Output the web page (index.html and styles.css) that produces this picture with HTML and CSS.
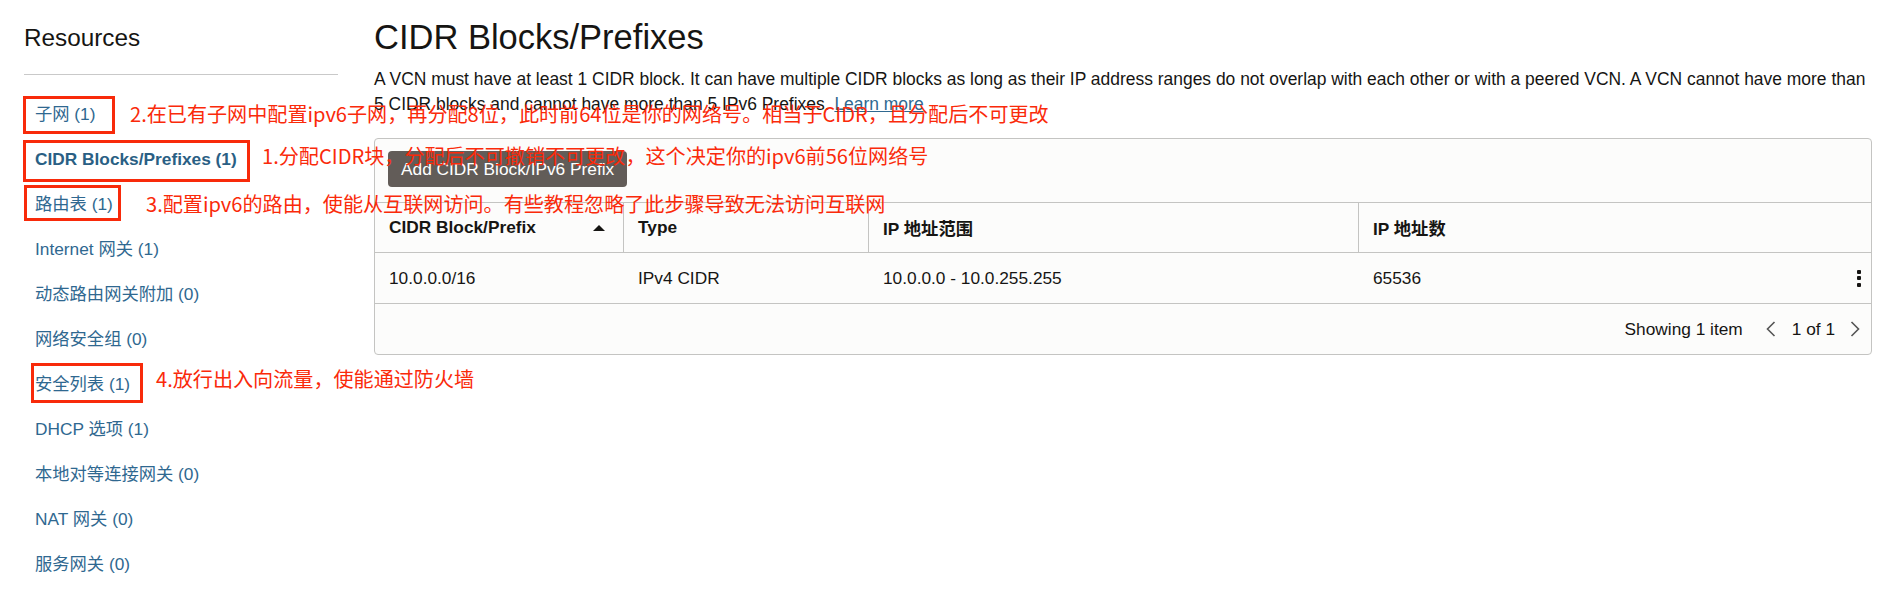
FILE: index.html
```html
<!DOCTYPE html>
<html lang="zh-CN">
<head>
<meta charset="utf-8">
<title>CIDR Blocks/Prefixes</title>
<link rel="stylesheet" href="styles.css">
</head>
<body>
<div class="page">
  <aside class="sidebar">
    <h2 class="side-title">Resources</h2>
    <nav class="side-nav">
      <a class="side-link" href="#">子网 (1)</a>
      <a class="side-link active" href="#">CIDR Blocks/Prefixes (1)</a>
      <a class="side-link" href="#">路由表 (1)</a>
      <a class="side-link" href="#">Internet 网关 (1)</a>
      <a class="side-link" href="#">动态路由网关附加 (0)</a>
      <a class="side-link" href="#">网络安全组 (0)</a>
      <a class="side-link" href="#">安全列表 (1)</a>
      <a class="side-link" href="#">DHCP 选项 (1)</a>
      <a class="side-link" href="#">本地对等连接网关 (0)</a>
      <a class="side-link" href="#">NAT 网关 (0)</a>
      <a class="side-link" href="#">服务网关 (0)</a>
    </nav>
  </aside>

  <main class="content">
    <h1 class="title">CIDR Blocks/Prefixes</h1>
    <p class="desc">A VCN must have at least 1 CIDR block. It can have multiple CIDR blocks as long as their IP address ranges do not overlap with each other or with a peered VCN. A VCN cannot have more than 5 CIDR blocks and cannot have more than 5 IPv6 Prefixes. <a class="learn" href="#">Learn more</a></p>

    <section class="table-box">
      <div class="toolbar">
        <button class="btn">Add CIDR Block/IPv6 Prefix</button>
      </div>
      <div class="tbl">
        <div class="th sep"><span>CIDR Block/Prefix</span><span class="sort"></span></div>
        <div class="th sep">Type</div>
        <div class="th sep">IP 地址范围</div>
        <div class="th">IP 地址数</div>

        <div class="td">10.0.0.0/16</div>
        <div class="td">IPv4 CIDR</div>
        <div class="td">10.0.0.0 - 10.0.255.255</div>
        <div class="td last"><span>65536</span><span class="kebab"><i></i><i></i><i></i></span></div>
      </div>
      <div class="tfoot">
        <span class="showing">Showing 1 item</span>
        <svg class="chev" width="10" height="16" viewBox="0 0 10 16"><polyline points="8.5,1 1.5,8 8.5,15" fill="none" stroke="#555" stroke-width="1.6"/></svg>
        <span class="pages">1 of 1</span>
        <svg class="chev" width="10" height="16" viewBox="0 0 10 16"><polyline points="1.5,1 8.5,8 1.5,15" fill="none" stroke="#555" stroke-width="1.6"/></svg>
      </div>
    </section>
  </main>

  <div class="marks">
    <div class="mark-box box-a"></div>
    <div class="mark-box box-b"></div>
    <div class="mark-box box-c"></div>
    <div class="mark-box box-d"></div>
    <div class="note note-2">2.在已有子网中配置ipv6子网，再分配8位，此时前64位是你的网络号。相当于CIDR，且分配后不可更改</div>
    <div class="note note-1">1.分配CIDR块，分配后不可撤销不可更改，这个决定你的ipv6前56位网络号</div>
    <div class="note note-3">3.配置ipv6的路由，使能从互联网访问。有些教程忽略了此步骤导致无法访问互联网</div>
    <div class="note note-4">4.放行出入向流量，使能通过防火墙</div>
  </div>
</div>
</body>
</html>
```

FILE: styles.css
```css
* { box-sizing: border-box; }

html, body {
  margin: 0;
  padding: 0;
  background: #ffffff;
}

body {
  font-family: "Liberation Sans", Arial, "Noto Sans CJK SC", sans-serif;
  color: #161513;
  font-size: 17.3px;
}

.page {
  position: relative;
  display: flex;
  width: 1890px;
  height: 590px;
  overflow: hidden;
}

/* Sidebar */
.sidebar {
  width: 338px;
  flex: none;
  padding: 24px 0 0 24px;
}

.side-title {
  margin: 0;
  font-size: 24.3px;
  font-weight: normal;
  line-height: 28px;
  color: #161513;
}

.side-nav {
  margin-top: 22px;
  border-top: 1px solid #c9c9c9;
  padding-top: 17px;
  display: flex;
  flex-direction: column;
}

.side-link {
  display: block;
  height: 45px;
  line-height: 45px;
  padding-left: 11px;
  color: #2f6890;
  text-decoration: none;
  white-space: nowrap;
}

.side-link.active {
  font-weight: bold;
  color: #2a5f84;
}

/* Main content */
.content {
  flex: 1;
  margin-left: 36px;
  padding: 17px 18px 0 0;
  min-width: 0;
}

.title {
  margin: 0;
  font-size: 34.5px;
  font-weight: normal;
  line-height: 40px;
  color: #161513;
}

.desc {
  margin: 10px 0 0 0;
  font-size: 17.45px;
  line-height: 25px;
  color: #161513;
}

.learn {
  color: #2f6890;
  text-decoration: underline;
}

.table-box {
  margin-top: 21px;
  border: 1px solid #c4c4c2;
  border-radius: 4px;
  background: #fcfcfb;
}

.toolbar {
  padding: 12px 13px 15px 13px;
  border-bottom: 1px solid #c4c4c2;
}

.btn {
  height: 36px;
  padding: 0 13px;
  border: none;
  border-radius: 4px;
  background: #625c58;
  color: #ffffff;
  font-family: "Liberation Sans", Arial, sans-serif;
  font-size: 17.3px;
  line-height: 36px;
}

.tbl {
  display: grid;
  grid-template-columns: 249px 245px 490px 1fr;
}

.th {
  height: 50px;
  padding: 0 14px;
  display: flex;
  align-items: center;
  font-weight: bold;
  border-bottom: 1px solid #c4c4c2;
  white-space: nowrap;
}

.th.sep { border-right: 1px solid #c4c4c2; }

.th:first-child {
  justify-content: space-between;
  padding-right: 18px;
}

.sort {
  width: 0;
  height: 0;
  border-left: 6px solid transparent;
  border-right: 6px solid transparent;
  border-bottom: 6px solid #161513;
}

.td {
  height: 51px;
  padding: 0 14px;
  display: flex;
  align-items: center;
  border-bottom: 1px solid #c4c4c2;
  white-space: nowrap;
}

.td.last {
  justify-content: space-between;
  padding-right: 10px;
}

.kebab {
  display: flex;
  flex-direction: column;
  gap: 2.5px;
}

.kebab i {
  display: block;
  width: 4px;
  height: 4px;
  border-radius: 1px;
  background: #161513;
}

.tfoot {
  height: 50px;
  display: flex;
  align-items: center;
  justify-content: flex-end;
  padding-right: 11px;
}

.showing { margin-right: 23px; }

.pages { margin: 0 15px 0 16px; }

.chev { display: block; }

/* Red annotation overlay */
.marks {
  position: absolute;
  inset: 0;
  pointer-events: none;
}

.mark-box {
  position: absolute;
  border: 3px solid #f82a0a;
}

.box-a { left: 23px; top: 96px; width: 92px; height: 38px; }
.box-b { left: 23px; top: 140px; width: 227px; height: 42px; }
.box-c { left: 24px; top: 185px; width: 97px; height: 36px; }
.box-d { left: 31px; top: 363px; width: 112px; height: 40px; }

.note {
  position: absolute;
  font-family: "Noto Sans CJK SC", "Liberation Sans", sans-serif;
  font-size: 20.1px;
  line-height: 24px;
  color: #fa2a0a;
  white-space: nowrap;
}

.note-2 { left: 130px; top: 102px; }
.note-1 { left: 262px; top: 144px; }
.note-3 { left: 146px; top: 192px; }
.note-4 { left: 156px; top: 367px; }
```
